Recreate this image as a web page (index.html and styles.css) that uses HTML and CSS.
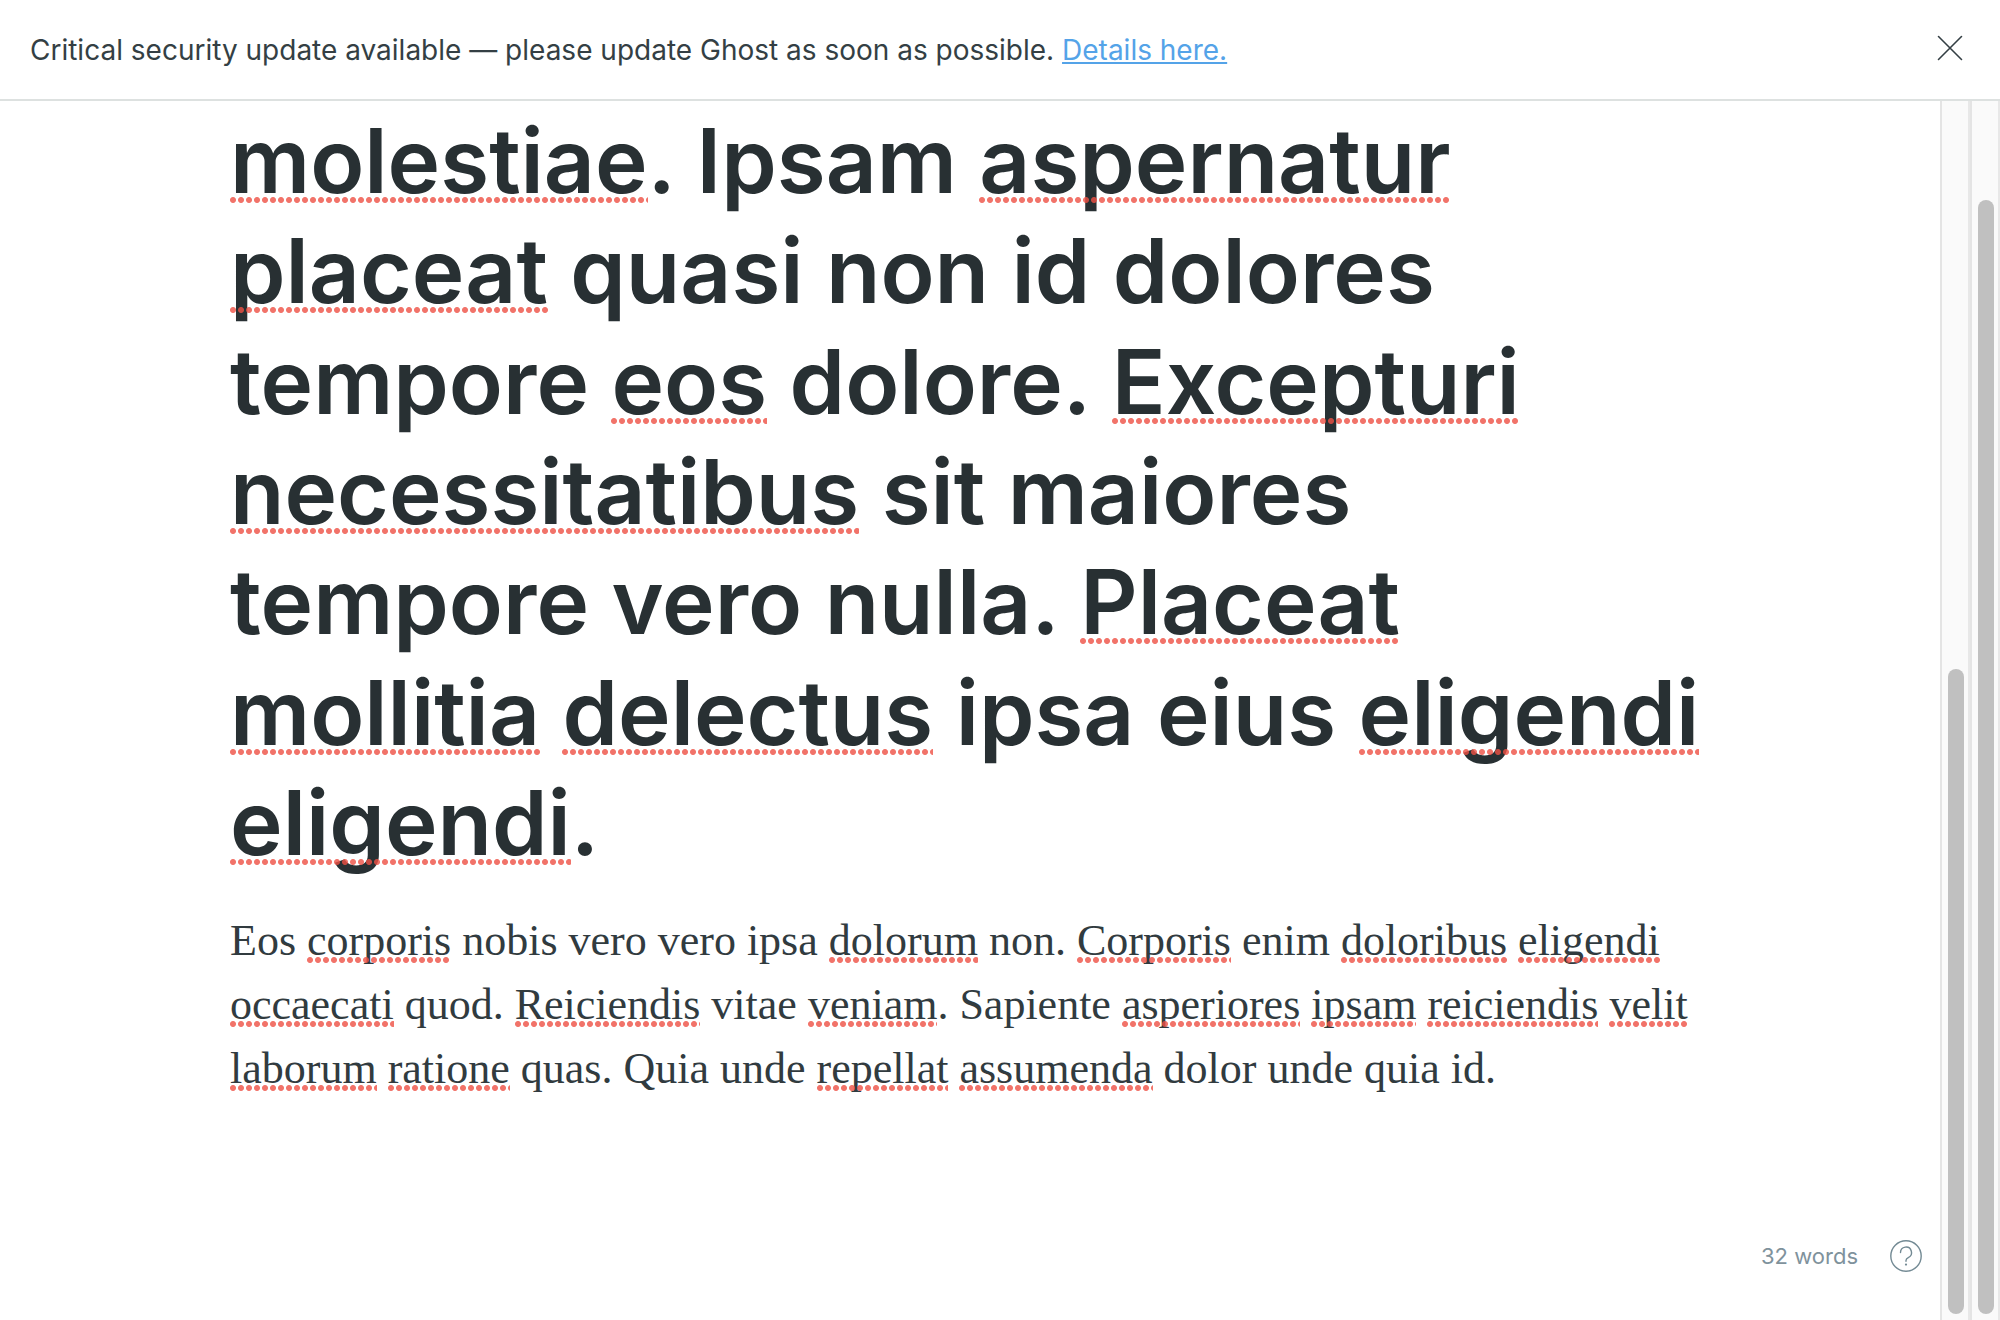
FILE: index.html
```html
<!DOCTYPE html>
<html lang="en">
<head>
<meta charset="utf-8">
<title>Ghost editor</title>
<link rel="stylesheet" href="styles.css">
</head>
<body>
<div class="app">
  <header class="alert">
    <p class="alert-text">Critical security update available — please update Ghost as soon as possible. <a class="alert-link" href="#details">Details here.</a></p>
    <button class="icon-button" type="button" aria-label="Close">
      <svg width="26" height="26" viewBox="0 0 26 26" fill="none" stroke="currentColor" stroke-width="1.6" stroke-linecap="round"><path d="M1.5 1.5l23 23M24.5 1.5l-23 23"/></svg>
    </button>
  </header>
  <div class="workspace">
    <main class="editor">
      <article class="post">
        <h1 class="post-title">
          <span class="line"><span class="typo">molestiae</span>. Ipsam <span class="typo">aspernatur</span></span>
          <span class="line"><span class="typo">placeat</span> quasi non id dolores</span>
          <span class="line">tempore <span class="typo">eos</span> dolore. <span class="typo">Excepturi</span></span>
          <span class="line"><span class="typo">necessitatibus</span> sit maiores</span>
          <span class="line">tempore vero nulla. <span class="typo">Placeat</span></span>
          <span class="line"><span class="typo">mollitia</span> <span class="typo">delectus</span> ipsa eius <span class="typo">eligendi</span></span>
          <span class="line"><span class="typo">eligendi</span>.</span>
        </h1>
        <p class="post-body">
          <span class="line">Eos <span class="typo">corporis</span> nobis vero vero ipsa <span class="typo">dolorum</span> non. <span class="typo">Corporis</span> enim <span class="typo">doloribus</span> <span class="typo">eligendi</span></span>
          <span class="line"><span class="typo">occaecati</span> quod. <span class="typo">Reiciendis</span> vitae <span class="typo">veniam</span>. Sapiente <span class="typo">asperiores</span> <span class="typo">ipsam</span> <span class="typo">reiciendis</span> <span class="typo">velit</span></span>
          <span class="line"><span class="typo">laborum</span> <span class="typo">ratione</span> quas. Quia unde <span class="typo">repellat</span> <span class="typo">assumenda</span> dolor unde quia id.</span>
        </p>
      </article>
      <footer class="status">
        <span class="word-count">32 words</span>
        <a class="help" href="#help" aria-label="Help">
          <svg width="32" height="32" viewBox="0 0 32 32" fill="none" stroke="currentColor" stroke-width="1.4"><circle cx="16" cy="16" r="15.2"/><path d="M10.5 12.6a5.5 5.5 0 1 1 7.8 5c-1.6.8-2.3 1.5-2.3 2.9v.8" stroke-linecap="round"/><circle cx="16" cy="24.6" r="1.1" fill="currentColor" stroke="none"/></svg>
        </a>
      </footer>
    </main>
    <div class="scroll-track"><div class="scroll-thumb" style="height:53.2%"></div></div>
    <div class="scroll-track"><div class="scroll-thumb" style="height:91.8%"></div></div>
  </div>
</div>
</body>
</html>
```
FILE: styles.css
```css
* { box-sizing: border-box; }

body {
  margin: 0;
  background: #fff;
  color: #343f44;
  font-family: Inter, "Liberation Sans", sans-serif;
}

.app {
  display: flex;
  flex-direction: column;
  height: 100vh;
  overflow: hidden;
}

.alert {
  display: flex;
  align-items: flex-start;
  justify-content: space-between;
  padding: 29px 37px 27px 30px;
  border-bottom: 2px solid #dde1e0;
}

.alert-text {
  margin: 0;
  font-size: 28px;
  line-height: 43px;
}

.alert-link {
  color: #54a3e8;
  text-decoration: underline;
  text-decoration-thickness: 2px;
  text-underline-offset: 2px;
  text-decoration-skip-ink: none;
}

.icon-button {
  display: flex;
  margin: 6px 0 0;
  padding: 0;
  border: 0;
  background: none;
  color: #343f44;
}

.workspace {
  display: flex;
  flex: 1;
  min-height: 0;
}

.editor {
  display: flex;
  flex: 1;
  flex-direction: column;
  justify-content: space-between;
  min-width: 0;
}

.post {
  width: 100%;
  max-width: 1480px;
  margin: 0 auto;
  padding-top: 5px;
}

.post-title {
  margin: 0 0 30px;
  color: #283033;
  font-size: 89px;
  font-weight: 600;
  line-height: 1.24;
}

.post-body {
  margin: 0;
  color: #313b3f;
  font-family: "Liberation Serif", serif;
  font-size: 44px;
  line-height: 64px;
}

.line {
  display: block;
  white-space: nowrap;
}

.typo { position: relative; }

/* spelling marks lie over the descenders */
.typo::after {
  content: "";
  position: absolute;
  right: 0;
  bottom: 11px;
  left: 0;
  height: 6px;
  background: radial-gradient(circle at 3px 3px, rgba(238, 80, 68, .8) 2.5px, rgba(238, 80, 68, 0) 3.5px) 0 0 / 8px 6px repeat-x;
}

.post-body .typo::after { bottom: 2px; }

.status {
  display: flex;
  align-items: center;
  justify-content: flex-end;
  gap: 32px;
  padding: 0 18px 48px 0;
  color: #7f929c;
}

.word-count {
  font-size: 22px;
  line-height: 32px;
}

.help {
  display: flex;
  color: #738a94;
}

.scroll-track {
  display: flex;
  flex-direction: column;
  justify-content: flex-end;
  width: 30px;
  padding: 0 4px 6px 6px;
  border-right: 2px solid #e8e8e8;
  border-left: 2px solid #e4e4e4;
  background: #fafafa;
}

.scroll-thumb {
  border-radius: 8px;
  background: #c0c0c0;
}
```
